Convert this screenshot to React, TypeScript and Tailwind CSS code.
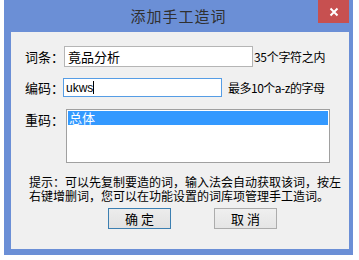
const font = "font-['Microsoft_YaHei','Noto_Sans_CJK_SC',sans-serif]";

const App = () => {
  return (
    <div className={`w-[359px] h-[260px] bg-white ${font}`}>
      <div className="ml-[4px] w-[349px] h-[255px] bg-[#6b8fd6] flex flex-col">
        {/* Title bar */}
        <div className="relative h-[32px] flex items-start justify-center shrink-0">
          <span className="mt-[5px] text-[15px] text-[#303030] tracking-[1px]">添加手工造词</span>
          <div className="absolute right-[4px] top-0 w-[31px] h-[23px] bg-[#c75050] flex items-center justify-center">
            <svg width="10" height="10" viewBox="0 0 10 10">
              <path d="M1.5 1.5 L8.5 8.5 M8.5 1.5 L1.5 8.5" stroke="white" strokeWidth="2" />
            </svg>
          </div>
        </div>

        {/* Content */}
        <div className="ml-[7px] mr-[4px] h-[217px] bg-[#f0f0f0] pt-[14px] text-[13px] text-black whitespace-nowrap">
          <div className="flex items-center h-[21px] pl-[14px]">
            <span className="w-[39px] shrink-0">词条：</span>
            <div className="w-[189px] h-[21px] shrink-0 bg-white border border-[#b5b5b5] flex items-center pl-[3px] text-[13px]">
              竟品分析
            </div>
            <span className="ml-[1px] text-[12px] tracking-[-0.3px]">35个字符之内</span>
          </div>

          <div className="flex items-center h-[19px] pl-[14px] mt-[11px]">
            <span className="w-[38px] shrink-0">编码：</span>
            <div className="w-[159px] h-[19px] shrink-0 bg-white border border-[#569de5] flex items-center pl-[2px] text-[12px] font-['Liberation_Sans',sans-serif]">
              ukws<span className="inline-block w-px h-[13px] bg-black" />
            </div>
            <span className="ml-[6px] text-[12px] tracking-[-0.5px]">最多10个a-z的字母</span>
          </div>

          <div className="flex items-start pl-[14px] mt-[12px]">
            <span className="w-[41px] shrink-0 mt-[1px]">重码：</span>
            <div className="w-[264px] h-[54px] shrink-0 bg-white border border-[#a0a0a0] p-px">
              <div className="h-[14px] bg-[#3399ff] text-white text-[13px] leading-[14px] pl-px">总体</div>
            </div>
          </div>

          <p className="mt-[12px] pl-[18px] pr-[4px] text-[12px] leading-[14px] tracking-[0px] whitespace-normal">
            提示：可以先复制要造的词，输入法会自动获取该词，按左右键增删词，您可以在功能设置的词库项管理手工造词。
          </p>

          <div className="flex mt-[5px] pl-[97px] gap-[43px]">
            <button className="w-[63px] h-[21px] border border-[#3c7fb1] bg-gradient-to-b from-[#ececec] to-[#e2e2e2] text-[13px] tracking-[3px] pl-[3px] flex items-center justify-center">
              确定
            </button>
            <button className="w-[63px] h-[21px] border border-[#acacac] bg-gradient-to-b from-[#efefef] to-[#e5e5e5] text-[13px] tracking-[3px] pl-[3px] flex items-center justify-center">
              取消
            </button>
          </div>
        </div>
      </div>
    </div>
  );
};

export default App;
